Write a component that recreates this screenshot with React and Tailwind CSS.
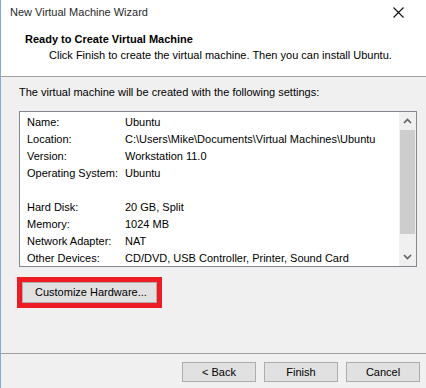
const rows = [
  ["Name:", "Ubuntu"],
  ["Location:", "C:\\Users\\Mike\\Documents\\Virtual Machines\\Ubuntu"],
  ["Version:", "Workstation 11.0"],
  ["Operating System:", "Ubuntu"],
  ["", ""],
  ["Hard Disk:", "20 GB, Split"],
  ["Memory:", "1024 MB"],
  ["Network Adapter:", "NAT"],
  ["Other Devices:", "CD/DVD, USB Controller, Printer, Sound Card"],
];

const WinButton = ({ children, className = "" }) => (
  <button
    className={
      "h-[20px] bg-[#e1e1e1] border border-[#adadad] text-[11px] leading-none text-black whitespace-nowrap " +
      className
    }
  >
    {children}
  </button>
);

export default function App() {
  return (
    <div
      className="w-[426px] h-[388px] bg-[#f0f0f0] border-l border-[#86a9d8] flex flex-col overflow-hidden text-black text-[11px]"
      style={{ fontFamily: '"Liberation Sans", Arial, sans-serif' }}
    >
      {/* header */}
      <div className="h-[77px] bg-white border-b border-[#a0a0a0] shrink-0">
        <div className="flex items-center justify-between h-[16px] mt-1 pl-[9px] pr-[22px]">
          <span className="leading-[16px] text-[#2a2a2a]">New Virtual Machine Wizard</span>
          <svg width="11" height="11" viewBox="0 0 11 11">
            <path d="M0.5 0.5 L10.5 10.5 M10.5 0.5 L0.5 10.5" stroke="#111" strokeWidth="1.1" />
          </svg>
        </div>
        <div className="mt-[11px] pl-[24px] leading-[16px] font-bold">
          Ready to Create Virtual Machine
        </div>
        <div className="pl-[48px] leading-[16px] whitespace-nowrap">
          Click Finish to create the virtual machine. Then you can install Ubuntu.
        </div>
      </div>

      {/* body */}
      <div className="flex-1 flex flex-col pl-[18px]">
        <div className="mt-[7px] leading-[16px] whitespace-nowrap">
          The virtual machine will be created with the following settings:
        </div>

        <div className="mt-[11px] w-[398px] h-[156px] bg-white border border-[#828790] flex">
          <div className="flex-1 pt-[2px] pl-[7px]">
            {rows.map(([label, value], i) => (
              <div key={i} className="flex h-[17px] items-center leading-[17px] whitespace-nowrap">
                <span className="w-[98px] shrink-0">{label}</span>
                <span>{value}</span>
              </div>
            ))}
          </div>
          <div className="w-[17px] bg-[#f0f0f0] flex flex-col">
            <div className="h-[18px] flex items-center justify-center">
              <svg width="9" height="6" viewBox="0 0 9 6">
                <path d="M1 5 L4.5 1.5 L8 5" stroke="#606060" strokeWidth="1.6" fill="none" />
              </svg>
            </div>
            <div className="mx-[1px] h-[104px] bg-[#cdcdcd]" />
            <div className="flex-1" />
            <div className="h-[18px] flex items-center justify-center">
              <svg width="9" height="6" viewBox="0 0 9 6">
                <path d="M1 1 L4.5 4.5 L8 1" stroke="#606060" strokeWidth="1.6" fill="none" />
              </svg>
            </div>
          </div>
        </div>

        <div className="mt-[10px] -ml-[2px] w-[145px] h-[31px] border-[5px] border-[#ed1c24] flex">
          <WinButton className="w-full h-full text-left pl-[12px]">Customize Hardware...</WinButton>
        </div>

        <div className="flex-1" />
      </div>

      {/* footer */}
      <div className="h-[35px] border-t border-[#a0a0a0] shrink-0 flex justify-end gap-[8px] pr-[6px] pt-[8px]">
        <WinButton className="w-[74px]">&lt; Back</WinButton>
        <WinButton className="w-[74px]">Finish</WinButton>
        <WinButton className="w-[74px]">Cancel</WinButton>
      </div>
    </div>
  );
}
